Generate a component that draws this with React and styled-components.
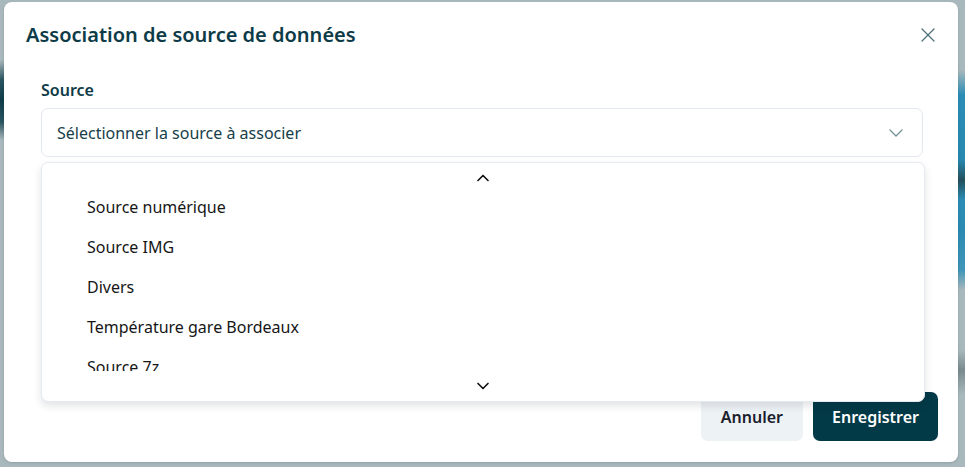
import React from "react"
import styled, { createGlobalStyle } from "styled-components"
import { X, ChevronDown, ChevronUp } from "lucide-react"

const sources = [
    "Source numérique",
    "Source IMG",
    "Divers",
    "Température gare Bordeaux",
    "Source 7z",
]

export default function App() {
    return (
        <>
            <GlobalStyle />
            <Backdrop>
                <Dialog>
                    <Header>
                        <Title>Association de source de données</Title>
                        <CloseButton aria-label="Fermer">
                            <X size={24} strokeWidth={1.3} />
                        </CloseButton>
                    </Header>
                    <Body>
                        <Field>
                            <Label>Source</Label>
                            <Trigger>
                                <span>Sélectionner la source à associer</span>
                                <ChevronDown size={24} strokeWidth={1.3} />
                            </Trigger>
                            <Menu>
                                <ScrollButton top><ChevronUp size={20} strokeWidth={2} /></ScrollButton>
                                <Viewport>
                                    {sources.map((s) => (
                                        <Item key={s}>{s}</Item>
                                    ))}
                                </Viewport>
                                <ScrollButton><ChevronDown size={20} strokeWidth={2} /></ScrollButton>
                            </Menu>
                        </Field>
                    </Body>
                    <Footer>
                        <Button>Annuler</Button>
                        <Button primary>Enregistrer</Button>
                    </Footer>
                </Dialog>
            </Backdrop>
        </>
    )
}

const GlobalStyle = createGlobalStyle`
* { box-sizing: border-box; }
body {
    margin: 0;
    font-family: 'Noto Sans', 'Open Sans', sans-serif;
    background: #a8b8bc;
}
`

const Backdrop = styled.div`
width: 965px;
height: 467px;
padding: 2px 7px 5px 4px;
background:
    linear-gradient(180deg, transparent 60px, #2a5560 80px, #0f3d48 100px, #2a5560 122px, transparent 140px) left top / 5px 100% no-repeat,
    linear-gradient(180deg, transparent 70px, #2b8db5 95px, #2788b0 160px, #24505c 180px, #2b8db5 200px, #2a8ab2 230px, #3f95b8 270px, transparent 290px, transparent 350px, #7a8a8e 370px, transparent 395px) right top / 8px 100% no-repeat,
    #a8b8bc;
`

const Dialog = styled.div`
width: 954px;
height: 460px;
background: #ffffff;
border-radius: 8px;
display: flex;
flex-direction: column;
box-shadow: 0 1px 3px rgba(0, 0, 0, 0.12);
`

const Header = styled.div`
display: flex;
align-items: center;
justify-content: space-between;
padding: 19px 18px 0 22px;
`

const Title = styled.h2`
margin: 0;
font-size: 20px;
line-height: 28px;
font-weight: 600;
color: #0d3b47;
`

const CloseButton = styled.button`
border: none;
background: none;
padding: 0;
color: #4f7178;
display: flex;
cursor: pointer;
`

const Body = styled.div`
flex: 1;
padding: 30px 35px 0 37px;
`

const Field = styled.div`
position: relative;
display: flex;
flex-direction: column;
gap: 7px;
`

const Label = styled.label`
font-size: 16px;
line-height: 22px;
font-weight: 600;
color: #0d3b47;
`

const Trigger = styled.div`
height: 49px;
border: 1px solid #e3e8ef;
border-radius: 7px;
display: flex;
align-items: center;
justify-content: space-between;
padding: 0 14px 0 15px;
font-size: 16px;
color: #17404a;

svg {
    color: #6f9399;
}
`

const Menu = styled.div`
position: absolute;
top: 83px;
left: 0;
right: -2px;
height: 240px;
background: #ffffff;
border: 1px solid #e5e9f0;
border-radius: 7px;
box-shadow: 0 4px 8px rgba(15, 23, 42, 0.12);
display: flex;
flex-direction: column;
overflow: hidden;
z-index: 2;
`

const ScrollButton = styled.div`
flex: ${(p) => (p.top ? "0 0 24px" : "1")};
min-height: 0;
display: flex;
align-items: center;
justify-content: center;
padding-top: ${(p) => (p.top ? "6px" : "0")};
color: #111111;
`

const Viewport = styled.div`
flex: none;
height: 184px;
overflow: hidden;
`

const Item = styled.div`
height: 40px;
display: flex;
align-items: center;
padding-left: 45px;
font-size: 16px;
color: #161616;
`

const Footer = styled.div`
display: flex;
justify-content: flex-end;
gap: 10px;
padding: 0 20px 21px;
`

const Button = styled.button`
height: 49px;
padding: 0 ${(p) => (p.primary ? "19px" : "20px")};
border: none;
border-radius: 7px;
font-family: inherit;
font-size: 16px;
font-weight: 600;
background: ${(p) => (p.primary ? "#033a47" : "#edf2f5")};
color: ${(p) => (p.primary ? "#ffffff" : "#1b1d2c")};
cursor: pointer;
`
